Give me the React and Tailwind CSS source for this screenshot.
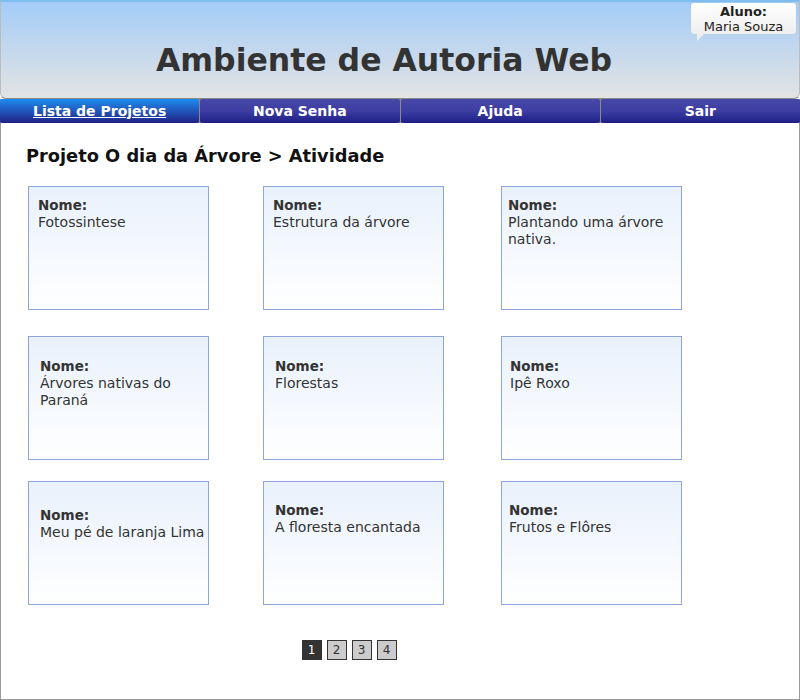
import React from "react";

const cards = [
  [
    { name: "Fotossintese", pad: "pt-[10px] pl-[9px]" },
    { name: "Estrutura da árvore", pad: "pt-[10px] pl-[9px]" },
    { name: "Plantando uma árvore nativa.", pad: "pt-[10px] pl-[6px]" },
  ],
  [
    { name: "Árvores nativas do Paraná", pad: "pt-[21px] pl-[11px]" },
    { name: "Florestas", pad: "pt-[21px] pl-[11px]" },
    { name: "Ipê Roxo", pad: "pt-[21px] pl-[8px]" },
  ],
  [
    { name: "Meu pé de laranja Lima", pad: "pt-[25px] pl-[11px]" },
    { name: "A floresta encantada", pad: "pt-[20px] pl-[11px]" },
    { name: "Frutos e Flôres", pad: "pt-[20px] pl-[7px]" },
  ],
];

const menu = ["Lista de Projetos", "Nova Senha", "Ajuda", "Sair"];

function Card({ item }) {
  return (
    <div
      className={`w-[181px] h-[124px] border border-[#8fa6dc] bg-gradient-to-b from-[#e9f1fc] to-[#ffffff] ${item.pad} pr-[2px] leading-[17px] text-[#333]`}
    >
      <p className="font-bold text-[13.5px]">Nome:</p>
      <p className="text-[14px]">{item.name}</p>
    </div>
  );
}

export default function App() {
  return (
    <div
      className="w-[800px] h-[700px] bg-white flex flex-col"
      style={{ fontFamily: '"DejaVu Sans", Verdana, sans-serif' }}
    >
      {/* header */}
      <div className="relative h-[99px] shrink-0 border-t-2 border-[#7dbdf0] rounded-b-[6px] border-x border-b border-x-[#bcbcbc] border-b-[#888] bg-gradient-to-b from-[#a3ccf7] to-[#e3e3e3] flex items-center justify-center">
        <h1 className="text-[31.5px] font-bold text-[#333] ml-[-32px] mt-[22px]">
          Ambiente de Autoria Web
        </h1>
        <div className="absolute right-[3px] top-[1px] w-[105px] h-[31px] bg-gradient-to-b from-[#ffffff] to-[#eeeeee] rounded-[3px] text-center text-[13px] leading-[15px] text-[#222] shadow-[0_0_1px_#bbb]">
          <p className="font-bold mt-[1px]">Aluno:</p>
          <p>Maria Souza</p>
          <div className="absolute left-[6px] bottom-[-7px] w-0 h-0 border-t-[7px] border-t-[#eeeeee] border-r-[7px] border-r-transparent" />
        </div>
      </div>
      {/* menu */}
      <div className="h-[24px] shrink-0 flex bg-[#8a8a8a] gap-[1px]">
        {menu.map((m, i) => (
          <div
            key={m}
            className={`flex-1 rounded-[2px] flex items-center justify-center text-white font-bold text-[14px] ${
              i === 0
                ? "bg-gradient-to-b from-[#1a8cf0] to-[#1f1f86] underline"
                : "bg-gradient-to-b from-[#4848a8] via-[#3d3da2] to-[#1e1e86]"
            }`}
          >
            {m}
          </div>
        ))}
      </div>
      {/* content */}
      <div className="flex-1 border-x border-b border-[#999] flex flex-col">
        <h2 className="text-[17.8px] font-bold text-[#111] pl-[25px] pt-[22px] leading-[21px]">
          Projeto O dia da Árvore &gt; Atividade
        </h2>
        <div className="pl-[27px] pt-[20px] flex flex-col">
          <div className="flex gap-[54px] [&>*:nth-child(3)]:ml-[3px]">
            {cards[0].map((c) => (
              <Card key={c.name} item={c} />
            ))}
          </div>
          <div className="flex gap-[54px] mt-[26px] [&>*:nth-child(3)]:ml-[3px]">
            {cards[1].map((c) => (
              <Card key={c.name} item={c} />
            ))}
          </div>
          <div className="flex gap-[54px] mt-[21px] [&>*:nth-child(3)]:ml-[3px]">
            {cards[2].map((c) => (
              <Card key={c.name} item={c} />
            ))}
          </div>
        </div>
        <div className="flex justify-center gap-[5px] mt-[35px] pr-[102px]">
          {[1, 2, 3, 4].map((n) => (
            <div
              key={n}
              className={`w-[20px] h-[20px] flex items-center justify-center text-[12px] ${
                n === 1
                  ? "bg-[#333] text-white"
                  : "bg-[#ccc] border border-[#333] text-[#333]"
              }`}
            >
              {n}
            </div>
          ))}
        </div>
      </div>
    </div>
  );
}
